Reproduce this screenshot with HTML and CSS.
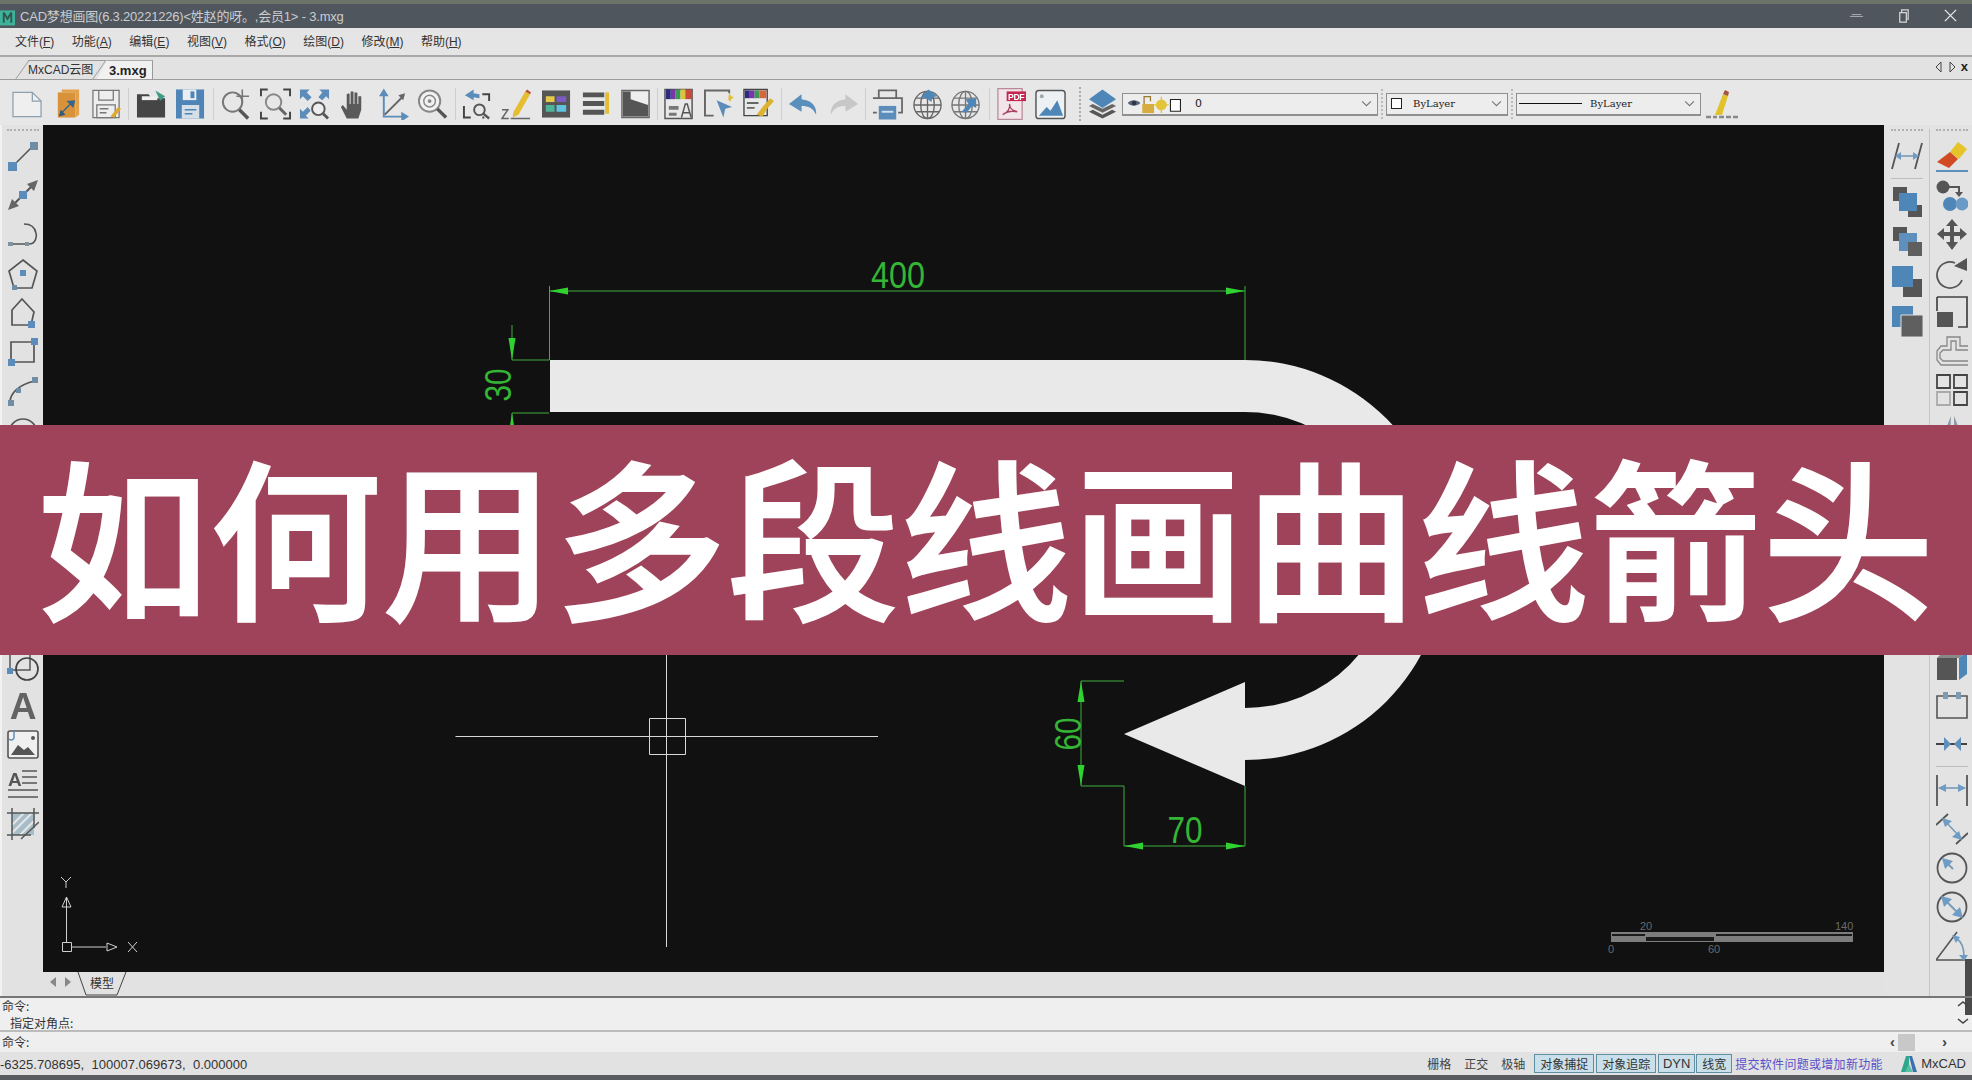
FILE: index.html
```html
<!DOCTYPE html>
<html lang="zh">
<head>
<meta charset="utf-8">
<title>CAD梦想画图</title>
<link rel="stylesheet" href="styles.css">
</head>
<body>
<div class="app">
  <header class="titlebar">
    <svg class="logo" viewBox="0 0 16 18"><path fill="#3fb39a" d="M0 2h16v16H0z"/><path fill="#31584f" d="M3 15V4h2l3 5 3-5h2v11h-2V8l-3 5-3-5v7z"/></svg>
    <span class="title-text">CAD梦想画图(6.3.20221226)&lt;姓赵的呀。,会员1&gt; - 3.mxg</span>
    <div class="win-ctrls">
      <svg class="win-btn" viewBox="0 0 16 16"><path d="M1 9h14M3 7h10" stroke="#aeb2b6" fill="none"/></svg>
      <svg class="win-btn" viewBox="0 0 16 16"><path d="M4 5h7v10H4zM6 5V2h7v10h-2" stroke="#d5d8da" fill="none" stroke-width="1.3"/></svg>
      <svg class="win-btn" viewBox="0 0 16 16"><path d="M2 2l12 12M14 2L2 14" stroke="#e2e4e6" fill="none" stroke-width="1.5"/></svg>
    </div>
  </header>

  <nav class="menubar">
    <span class="menu-item">文件(<u>F</u>)</span>
    <span class="menu-item">功能(<u>A</u>)</span>
    <span class="menu-item">编辑(<u>E</u>)</span>
    <span class="menu-item">视图(<u>V</u>)</span>
    <span class="menu-item">格式(<u>O</u>)</span>
    <span class="menu-item">绘图(<u>D</u>)</span>
    <span class="menu-item">修改(<u>M</u>)</span>
    <span class="menu-item">帮助(<u>H</u>)</span>
  </nav>

  <div class="tabbar">
    <span class="tab">MxCAD云图</span>
    <span class="tab tab-active">3.mxg</span>
    <div class="tab-nav">
      <svg class="tab-arrow" viewBox="0 0 8 12"><path d="M6 1L1 6l5 5z" fill="none" stroke="#444"/></svg>
      <svg class="tab-arrow" viewBox="0 0 8 12"><path d="M2 1l5 5-5 5z" fill="none" stroke="#444"/></svg>
      <span class="tab-close">x</span>
    </div>
  </div>

  <div class="toolbar">
    <span class="btn"><svg viewBox="0 0 32 32"><path d="M1 4h20l9 9v16H1z" fill="#efefef" stroke="#8da0ae" stroke-width="1.3"/><path d="M21 4v9h9" fill="none" stroke="#8da0ae" stroke-width="1.3"/></svg></span>
    <span class="btn"><svg viewBox="0 0 32 32"><path d="M6 4h18v26H6z" fill="#d8933a"/><path d="M10 1h18v26l-4 3V4H10z" fill="#e2a14a"/><path d="M10 26l9-9 3 3 2-8-9 1 3 3-9 9z" fill="#34658f"/><path d="M9 22l-2 7 7-2z" fill="#2f5a80"/></svg></span>
    <span class="btn"><svg viewBox="0 0 32 32"><path d="M2 2h27v28H2z" fill="#eee" stroke="#777" stroke-width="1.3"/><path d="M8 2v10h15V2M6 17h19v13H6z" fill="none" stroke="#777" stroke-width="1.3"/><path d="M9 21h9M9 25h7" stroke="#777" stroke-width="1.5"/><path d="M20 29l8-10 3 2-7 9z" fill="#e0a82e"/></svg></span>
    <span class="sep"></span>
    <span class="btn"><svg viewBox="0 0 32 32"><path d="M1 6h12l3 4h14v20H1z" fill="#454545"/><path d="M6 8h16v4H6z" fill="#eee"/><path d="M20 2l10 6-5 5z" fill="#3f9a86"/></svg></span>
    <span class="btn"><svg viewBox="0 0 32 32"><path d="M1 1h29v30H1z" fill="#4f84b6"/><path d="M8 1h14v11H8z" fill="#e8eef3"/><path d="M16 3h4v7h-4z" fill="#4f84b6"/><path d="M7 17h18v14H7z" fill="#d4dfe8"/><path d="M10 22h12M10 26h8" stroke="#4f84b6" stroke-width="1.5"/></svg></span>
    <span class="sep"></span>
    <span class="btn"><svg viewBox="0 0 32 32"><circle cx="13" cy="14" r="10" fill="none" stroke="#777" stroke-width="2"/><path d="M20 22l9 9" stroke="#555" stroke-width="3.5"/><path d="M17 8h13M23 1v14" stroke="#777" stroke-width="1.6"/></svg></span>
    <span class="btn"><svg viewBox="0 0 32 32"><path d="M1 8V1h7M24 1h7v7M1 24v7h7M24 31h7v-7" fill="none" stroke="#444" stroke-width="2"/><circle cx="14" cy="14" r="8" fill="none" stroke="#888" stroke-width="2"/><path d="M20 20l7 7" stroke="#666" stroke-width="3"/></svg></span>
    <span class="btn"><svg viewBox="0 0 32 32"><path d="M1 1h10L8 4l5 5-4 4-5-5-3 3zM31 1H21l3 3-4 5 4 3 4-4 3 3zM1 31V21l3 3 5-5 3 4-5 5 3 3z" fill="#5c8dba"/><circle cx="20" cy="21" r="6.5" fill="#eee" stroke="#555" stroke-width="2"/><path d="M25 26l5 5" stroke="#555" stroke-width="3"/></svg></span>
    <span class="btn"><svg viewBox="0 0 32 32"><path d="M9 31l-6-12 2-2 4 5V6l2-1 1 1v10h1V3h3v13h1V4h3v12h1V8h3v14l-3 9z" fill="#5a5a5a"/></svg></span>
    <span class="btn"><svg viewBox="0 0 32 32"><path d="M6 5v24h23" fill="none" stroke="#5c8dba" stroke-width="2"/><path d="M6 0l5 8H1zM32 29l-8 5v-10z" fill="#5c8dba"/><path d="M7 27L26 8" stroke="#666" stroke-width="2"/><path d="M28 5l-2 7-5-5z" fill="#666"/></svg></span>
    <span class="btn"><svg viewBox="0 0 32 32"><circle cx="13" cy="13" r="11" fill="#f2f2f2" stroke="#888" stroke-width="2"/><circle cx="13" cy="13" r="6" fill="none" stroke="#888" stroke-width="1.5"/><circle cx="13" cy="13" r="2" fill="#888"/><path d="M21 21l9 9" stroke="#555" stroke-width="3.5"/></svg></span>
    <span class="sep"></span>
    <span class="btn"><svg viewBox="0 0 32 32"><path d="M21 6h7v7M2 18v12h7M21 30h2" fill="none" stroke="#444" stroke-width="2"/><path d="M12 1L3 7l9 5V9l6 1V6l-6-1z" fill="#5c8dba"/><circle cx="18" cy="22" r="5.5" fill="none" stroke="#555" stroke-width="2"/><path d="M22 26l6 5" stroke="#555" stroke-width="2.5"/></svg></span>
    <span class="btn"><svg viewBox="0 0 32 32"><path d="M13 24L25 3l5 3-12 21-6 3z" fill="#e5bd30"/><path d="M25 3l2-2 4 3-1 2z" fill="#b9503a"/><path d="M1 22h6L1 31h7M10 31h20" fill="none" stroke="#666" stroke-width="1.6"/></svg></span>
    <span class="btn"><svg viewBox="0 0 32 32"><path d="M1 2h29v28H1z" fill="#555"/><path d="M5 8h9v6H5z" fill="#e6c84a"/><path d="M16 8h10v6H16z" fill="#7b5bc2"/><path d="M5 17h9v7H5z" fill="#4fb59a"/><path d="M16 17h10v7H16z" fill="#5fc3e0"/></svg></span>
    <span class="btn"><svg viewBox="0 0 32 32"><path d="M3 4h22v5H3zM3 13h22v5H3zM3 22h22v5H3z" fill="#555"/><path d="M26 4h4v22h-4z" fill="#e5bd30"/></svg></span>
    <span class="btn"><svg viewBox="0 0 32 32"><path d="M2 2h28v28H2z" fill="#eee" stroke="#666" stroke-width="1.5"/><path d="M3 3h8v8l18 6v12H3z" fill="#555"/></svg></span>
    <span class="sep"></span>
    <span class="btn"><svg viewBox="0 0 32 32"><path d="M1 1h28v30H1z" fill="#e8e8e8" stroke="#555" stroke-width="1.5"/><path d="M2 1h5v10H2z" fill="#2b2b80"/><path d="M7 1h5v10H7z" fill="#7b35a8"/><path d="M12 1h5v10h-5z" fill="#3a9a55"/><path d="M17 1h5v10h-5z" fill="#d9c53a"/><path d="M22 1h7v10h-7z" fill="#c74a3a"/><path d="M5 18h10v4H5zM5 25h8v3H5z" fill="#777"/><path d="M18 30l4-14h2l4 14M20 25h6" fill="none" stroke="#555" stroke-width="1.5"/></svg></span>
    <span class="btn"><svg viewBox="0 0 32 32"><path d="M26 5V2H1v26h9" fill="none" stroke="#666" stroke-width="2"/><path d="M13 12l16 7-7 2-2 9z" fill="#5c8dba"/><path d="M26 4l2 4 3 1-3 2-1 3-2-3z" fill="#e5bd30"/></svg></span>
    <span class="btn"><svg viewBox="0 0 32 32"><path d="M1 1h24v27H1z" fill="#e8e8e8" stroke="#444" stroke-width="1.4"/><path d="M2 2h5v8H2z" fill="#2b2b80"/><path d="M7 2h5v8H7z" fill="#7b35a8"/><path d="M12 2h5v8h-5z" fill="#3a9a55"/><path d="M17 2h7v8h-7z" fill="#d9653a"/><path d="M4 15h12M4 20h8" stroke="#666" stroke-width="2"/><path d="M14 27l7-9 4 3-5 8zM21 18l7-8 4 3-7 8z" fill="#dcb22e"/></svg></span>
    <span class="sep"></span>
    <span class="btn"><svg viewBox="0 0 32 32"><path d="M14 6L1 16l13 8v-6c7 0 12 2 15 9 1-8-4-15-15-16z" fill="#5a8fbd"/></svg></span>
    <span class="btn"><svg viewBox="0 0 32 32"><path d="M18 6l13 10-13 8v-6c-7 0-12 2-15 9-1-8 4-15 15-16z" fill="#c7c7c7"/></svg></span>
    <span class="sep"></span>
    <span class="btn"><svg viewBox="0 0 32 32"><path d="M7 10V2h18v8" fill="none" stroke="#666" stroke-width="1.8"/><path d="M1 10h30v15h-4M5 25H1z" fill="none" stroke="#666" stroke-width="1.8"/><path d="M7 18h18v14H7z" fill="#5c8dba"/><path d="M10 24h12" stroke="#cfe0ee" stroke-width="2"/></svg></span>
    <span class="btn"><svg viewBox="0 0 32 32"><g fill="none" stroke="#666" stroke-width="1.4"><circle cx="16" cy="17" r="14"/><ellipse cx="16" cy="17" rx="7" ry="14"/><path d="M2 17h28M4 10h24M4 24h24M16 3v28"/></g><path d="M9 9l8-8 9 7-5 1-1 5-5-4z" fill="#4f86b8"/></svg></span>
    <span class="btn"><svg viewBox="0 0 32 32"><g fill="none" stroke="#777" stroke-width="1.4"><circle cx="15" cy="17" r="14"/><ellipse cx="15" cy="17" rx="7" ry="14"/><path d="M1 17h28M3 10h24M3 24h24M15 3v28"/></g><path d="M26 10v10l-4-2-6 7-5-1 7-8-3-5z" fill="#4f86b8"/></svg></span>
    <span class="sep"></span>
    <span class="btn"><svg viewBox="0 0 32 32"><path d="M2 0h25v32H2z" fill="#f2e6ea" stroke="#b9899a" stroke-width="1.3"/><path d="M11 3h20v10H11z" fill="#c4264f"/><text class="pdf-label" x="12.5" y="11.5" textLength="17">PDF</text><path d="M7 27c5-2 8-7 7-11 0 4 3 7 8 8-5-1-11 0-15 3z" fill="none" stroke="#a94060" stroke-width="1.4"/></svg></span>
    <span class="btn"><svg viewBox="0 0 32 32"><rect x="1" y="2" width="30" height="29" rx="3" fill="#eef1f3" stroke="#555" stroke-width="1.5"/><circle cx="7" cy="8" r="2" fill="#9aa"/><path d="M4 28l8-9 4 4 7-11 6 16z" fill="#4f86b8"/></svg></span>
    <span class="grip"></span>
    <span class="btn"><svg viewBox="0 0 32 32"><path d="M2 24l14 7 14-7-4-2-10 5-10-5z" fill="#555"/><path d="M2 18l14 7 14-7-4-2-10 5-10-5z" fill="#666"/><path d="M16 1l14 10-14 9L2 11z" fill="#4f86b8"/></svg></span>
    <div class="combo combo-layer">
      <svg class="layer-state" viewBox="0 0 60 22"><path d="M0 10c3-4 10-4 14 0-4 4-11 4-14 0z" fill="#56677a"/><circle cx="7" cy="10" r="2.500" fill="#334"/><path d="M16 11h13v10H16z" fill="#d8ad40"/><path d="M18 11V3h7v5" fill="none" stroke="#9a7a2c" stroke-width="1.4"/><circle cx="37" cy="12" r="6" fill="#e3c53a"/><path d="M37 3v18M29 12h16" stroke="#e3c53a" stroke-width="1.5"/><path d="M47 6h11v13H47z" fill="#fff" stroke="#222" stroke-width="1.2"/></svg>
      <span class="combo-zero">0</span>
      <svg class="chev" viewBox="0 0 10 6"><path d="M1 1l4 4 4-4" fill="none" stroke="#777"/></svg>
    </div>
    <span class="combo-gap"></span>
    <div class="combo combo-color">
      <span class="swatch"></span>
      <span class="combo-text">ByLayer</span>
      <svg class="chev" viewBox="0 0 10 6"><path d="M1 1l4 4 4-4" fill="none" stroke="#777"/></svg>
    </div>
    <span class="combo-gap"></span>
    <div class="combo combo-line">
      <span class="line-sample"></span>
      <span class="combo-text">ByLayer</span>
      <svg class="chev" viewBox="0 0 10 6"><path d="M1 1l4 4 4-4" fill="none" stroke="#777"/></svg>
    </div>
    <svg class="match-pen" viewBox="0 0 32 32"><path d="M9 27l8-21 5 2-6 19z" fill="#e2c22c"/><path d="M17 6l2-4 4 2-1 4z" fill="#a8553e"/><path d="M0 29h5M7 29h4M13 29h5M20 29h5M27 29h5" stroke="#888" stroke-width="2.4"/></svg>
  </div>

  <main class="workspace">
    <aside class="sidebar-left">
      <span class="grip-h"></span>
      <span class="tool"><svg viewBox="0 0 32 32"><path d="M6 26L26 6" stroke="#555" stroke-width="1.6"/><path d="M1 22h9v9H1z" fill="#5c8dba"/><path d="M23 2h8v8h-8z" fill="#6f8da5"/></svg></span>
      <span class="tool"><svg viewBox="0 0 32 32"><path d="M6 26L26 6" stroke="#555" stroke-width="2"/><path d="M31 1l-4 11-7-7zM1 31l4-11 7 7z" fill="#666"/><path d="M12 12h8v8h-8z" fill="#5c8dba"/></svg></span>
      <span class="tool"><svg viewBox="0 0 32 32"><path d="M4 26h18c7 0 8-8 7-11-1-5-5-9-12-9" fill="none" stroke="#555" stroke-width="1.6"/><path d="M1 24h5v4H1zM18 24h4v4h-4z" fill="#7f929f"/></svg></span>
      <span class="tool"><svg viewBox="0 0 32 32"><path d="M16 2l14 11-5 17H7L2 13z" fill="none" stroke="#555" stroke-width="1.7"/><path d="M13 12h6v6h-6z" fill="#5c8dba"/><path d="M5 27h5v5H5z" fill="#6f8da5"/></svg></span>
      <span class="tool"><svg viewBox="0 0 32 32"><path d="M15 2l12 13-3 13H5V13z" fill="none" stroke="#555" stroke-width="1.7"/><path d="M21 24h7v7h-7z" fill="#5c8dba"/></svg></span>
      <span class="tool"><svg viewBox="0 0 32 32"><path d="M4 6h23v20H4z" fill="none" stroke="#555" stroke-width="1.7"/><path d="M24 2h7v7h-7zM1 23h7v7H1z" fill="#5c8dba"/></svg></span>
      <span class="tool"><svg viewBox="0 0 32 32"><path d="M3 26c1-7 7-16 25-20" fill="none" stroke="#555" stroke-width="1.7"/><path d="M1 25h6v6H1zM9 13h5v5H9zM25 2h6v6h-6z" fill="#6f8da5"/></svg></span>
      <span class="tool"><svg viewBox="0 0 32 32"><circle cx="16" cy="18" r="14" fill="none" stroke="#555" stroke-width="1.7"/></svg></span>
      <span class="left-gap"></span>
      <span class="tool"><svg viewBox="0 0 32 32"><path d="M3 3h20v16H3z" fill="none" stroke="#555" stroke-width="1.5"/><circle cx="20" cy="18" r="11" fill="none" stroke="#444" stroke-width="1.7"/><path d="M0 17h6v6H0z" fill="#5c8dba"/></svg></span>
      <span class="tool"><svg class="tool-svg-open" viewBox="0 0 32 32"><text class="tool-a" x="16" y="29">A</text></svg></span>
      <span class="tool"><svg viewBox="0 0 32 32"><rect x="1" y="2" width="30" height="27" rx="2" fill="#f0f0f0" stroke="#555" stroke-width="1.6"/><path d="M4 26l7-10 6 5 4-3 7 8z" fill="#555"/><circle cx="26" cy="9" r="2" fill="#555"/><path d="M7 2v7a3 3 0 0 1-5 1" fill="none" stroke="#5c8dba" stroke-width="1.5"/></svg></span>
      <span class="tool"><svg class="tool-svg-open" viewBox="0 0 32 32"><text class="tool-a-small" x="1" y="18">A</text><path d="M15 3h15M15 9h15M15 15h15M1 22h30M1 29h30" stroke="#555" stroke-width="1.7"/></svg></span>
      <span class="tool"><svg viewBox="0 0 32 32"><path d="M5 5h22v22H5z" fill="#a7bdc9"/><path d="M5 17L17 5M5 25L25 5M13 27L27 13" stroke="#e6e6e6" stroke-width="2"/><path d="M0 5h32M0 27h24M5 0v32M27 0v20" stroke="#555" stroke-width="1.5"/><path d="M14 31L32 14" stroke="#555" stroke-width="1.5"/></svg></span>
    </aside>

    <div class="center">
      <svg class="drawing" viewBox="43 125 1841 847">
        <rect class="bg" x="43" y="125" width="1841" height="847"/>
        <path class="shape" d="M550 360H1245A200 200 0 0 1 1245 760V786L1124 734 1245 682V708A148 148 0 0 0 1245 412H550Z"/>
        <g class="dim-line">
          <path d="M549.500 360V286M1245 360V286M549 291H1245"/>
          <path d="M512 325V360H549M512 413H549M512 413V470"/>
          <path d="M1081 786V681H1124M1081 786H1124M1124 786V846M1245 786V846M1124 846H1245"/>
        </g>
        <g class="dim-arrow">
          <path d="M549 291L568 287.500V294.500ZM1245 291L1226 287.500V294.500Z"/>
          <path d="M512 360L508.500 338H515.500ZM512 413L508.500 435H515.500Z"/>
          <path d="M1081 681L1077.500 702H1084.500ZM1081 786L1077.500 765H1084.500Z"/>
          <path d="M1124 846L1143 842.500V849.500ZM1245 846L1226 842.500V849.500Z"/>
        </g>
        <g class="dim-text">
          <text x="898" y="288" textLength="54" lengthAdjust="spacingAndGlyphs">400</text>
          <text x="1185" y="843" textLength="35" lengthAdjust="spacingAndGlyphs">70</text>
          <text transform="translate(511 385) rotate(-90)" textLength="33" lengthAdjust="spacingAndGlyphs">30</text>
          <text transform="translate(1081 734) rotate(-90)" textLength="33" lengthAdjust="spacingAndGlyphs">60</text>
        </g>
        <g class="cursor">
          <path d="M455.500 736.500H878M666.500 525V947M649.500 718.500H685.500V754.500H649.500Z"/>
        </g>
        <g class="ucs">
          <path d="M62.500 942.500H71.500V951.500H62.500ZM66.500 942V897M71 947H106"/>
          <path d="M66.500 897L62 907H71ZM117 947L107 943V951Z"/>
          <path d="M128 942L137 952M137 942L128 952M61 877L66 882L71 877M66 882V888"/>
        </g>
        <g class="scalebar">
          <rect class="bar-out" x="1611" y="932" width="242" height="10"/>
          <rect class="bar-dark" x="1646" y="937" width="68" height="4"/>
          <rect class="bar-dark" x="1716" y="934" width="136" height="2"/>
          <rect class="bar-dark" x="1612" y="934" width="33" height="2"/>
          <text x="1640" y="930">20</text>
          <text x="1835" y="930">140</text>
          <text x="1608" y="953">0</text>
          <text x="1708" y="953">60</text>
        </g>
      </svg>
      <div class="modelbar">
        <svg class="nav-arrow" viewBox="0 0 10 12"><path d="M8 1L2 6l6 5z" fill="#888"/></svg>
        <svg class="nav-arrow" viewBox="0 0 10 12"><path d="M2 1l6 5-6 5z" fill="#888"/></svg>
        <span class="model-tab">
          <svg class="model-shape" viewBox="0 0 50 24"><path d="M1 0l8 23h31l9-23" fill="none" stroke="#444"/></svg>
          <span class="model-label">模型</span>
        </span>
      </div>
    </div>

    <aside class="sidebar-right">
      <div class="right-col">
        <span class="grip-h"></span>
        <span class="tool tool-wide"><svg viewBox="0 0 32 32"><path d="M8 3L1 29M31 3l-7 26" stroke="#555" stroke-width="1.8"/><path d="M5 16h22" stroke="#7a9ab5" stroke-width="1.6"/><path d="M4 16l6-4v8zM28 16l-6-4v8z" fill="#6e9cc4"/></svg></span>
        <span class="rule rule-upper"></span>
        <span class="tool tool-wide"><svg viewBox="0 0 32 32"><path d="M2 2h14v14H2zM17 20h14v12H17z" fill="#555"/><path d="M8 8h18v18H8z" fill="#4f86b8"/></svg></span>
        <span class="tool tool-wide"><svg viewBox="0 0 32 32"><path d="M2 2h14v14H2z" fill="#555"/><path d="M8 8h18v18H8z" fill="#5f90bd"/><path d="M17 17h14v14H17z" fill="#5f5f5f"/></svg></span>
        <span class="tool tool-wide tool-drop"><svg viewBox="0 0 32 32"><path d="M12 14h19v18H12z" fill="#555"/><path d="M1 1h21v21H1z" fill="#4f86b8"/></svg></span>
        <span class="tool tool-wide"><svg viewBox="0 0 32 32"><path d="M1 1h21v21H1z" fill="#4f86b8"/><path d="M10 10h22v22H10z" fill="#5f5f5f" stroke="#ddd"/></svg></span>
      </div>
      <div class="right-col right-col-b">
        <span class="grip-h"></span>
        <span class="tool"><svg viewBox="0 0 32 32"><path d="M14 12L22 2l9 7-8 10z" fill="#e6c328"/><path d="M1 22l13-10 8 7-9 9z" fill="#d04a22"/><path d="M0 31h32" stroke="#4f86b8" stroke-width="1.8"/></svg></span>
        <span class="tool"><svg viewBox="0 0 32 32"><circle cx="7" cy="8" r="6.500" fill="#555"/><path d="M13 8h10v6" fill="none" stroke="#555" stroke-width="2"/><path d="M19 13h8l-4 5z" fill="#555"/><circle cx="14" cy="25" r="7" fill="#4f86b8"/><circle cx="26" cy="25" r="6.500" fill="#6a9ac6"/></svg></span>
        <span class="tool"><svg viewBox="0 0 32 32"><path d="M16 1l6 7h-4v6h6v-4l7 6-7 6v-4h-6v6h4l-6 8-6-8h4v-6H8v4l-7-6 7-6v4h6V8h-4z" fill="#555"/></svg></span>
        <span class="tool"><svg viewBox="0 0 32 32"><path d="M26 23A13 13 0 1 1 19 6" fill="none" stroke="#555" stroke-width="1.8"/><path d="M18 9L31 1v13z" fill="#555"/></svg></span>
        <span class="tool"><svg viewBox="0 0 32 32"><path d="M1 1h30v30h-9M1 1v14" fill="none" stroke="#444" stroke-width="1.7"/><path d="M1 16h16v15H1z" fill="#555"/></svg></span>
        <span class="tool"><svg viewBox="0 0 32 32"><path d="M32 11H24V2H11v9H5l-4 5v9l4 5h27M32 15H20V6h-5v9H7l-3 3v5l3 3h25" fill="none" stroke="#888" stroke-width="1.3"/></svg></span>
        <span class="tool"><svg viewBox="0 0 32 32"><path d="M1 1h13v13H1zM18 1h13v13H18zM18 18h13v13H18z" fill="none" stroke="#444" stroke-width="1.8"/><path d="M1 18h13v13H1z" fill="none" stroke="#aaa" stroke-width="1.8"/></svg></span>
        <span class="tool"><svg viewBox="0 0 32 32"><path d="M15 3L4 30h10zM18 3l11 27H18z" fill="#8a9aa8"/></svg></span>
        <span class="right-gap"></span>
        <span class="tool"><svg viewBox="0 0 32 32"><path d="M1 8h20v22H1z" fill="#555"/><path d="M1 8l6-6h24l-8 6z" fill="#888"/><path d="M23 8l8-6v22l-8 6z" fill="#4f86b8"/></svg></span>
        <span class="tool"><svg viewBox="0 0 32 32"><path d="M8 7H1v22h30V7h-7M12 7h8" fill="none" stroke="#555" stroke-width="1.6"/><path d="M7 3h5v7H7zM20 3h5v7h-5z" fill="#7f9bb2"/></svg></span>
        <span class="tool"><svg viewBox="0 0 32 32"><path d="M0 16h31" stroke="#333" stroke-width="1.8"/><path d="M15 16L8 9v14zM18 16l7-7v14z" fill="#5f90bd"/></svg></span>
        <span class="rule rule-lower"></span>
        <span class="tool"><svg viewBox="0 0 32 32"><path d="M1 1v31M31 1v31" stroke="#555" stroke-width="1.8"/><path d="M3 14h26" stroke="#7a9ab5" stroke-width="1.6"/><path d="M2 14l8-4v8zM30 14l-8-4v8z" fill="#6e9cc4"/></svg></span>
        <span class="tool"><svg viewBox="0 0 32 32"><path d="M0 12L12 1M20 31L32 20" stroke="#555" stroke-width="1.8"/><path d="M8 7l17 18" stroke="#7a9ab5" stroke-width="1.6"/><path d="M6 5l10 3-7 6zM26 27l-10-3 7-6z" fill="#6e9cc4"/></svg></span>
        <span class="tool"><svg viewBox="0 0 32 32"><circle cx="16" cy="16" r="14.500" fill="none" stroke="#555" stroke-width="1.8"/><path d="M8 8l9 9" stroke="#7a9ab5" stroke-width="2"/><path d="M6 6l11 3-8 8z" fill="#6e9cc4"/></svg></span>
        <span class="tool"><svg viewBox="0 0 32 32"><circle cx="16" cy="16" r="14.500" fill="none" stroke="#555" stroke-width="1.8"/><path d="M7 7l18 18" stroke="#7a9ab5" stroke-width="2"/><path d="M5 5l11 3-8 8zM27 27l-11-3 8-8z" fill="#6e9cc4"/></svg></span>
        <span class="tool"><svg viewBox="0 0 32 32"><path d="M0 30L21 2M0 30h32" stroke="#555" stroke-width="1.6"/><path d="M20 8c6 4 8 10 8 18" fill="none" stroke="#7a9ab5" stroke-width="1.6"/><path d="M16 5l8 2-4 6zM28 31l-5-6h9z" fill="#6e9cc4"/></svg></span>
      </div>
      <span class="scroll-thumb"></span>
    </aside>
  </main>

  <section class="command">
    <div class="cmd-history">
      <div class="cmd-line">命令:</div>
      <div class="cmd-line cmd-indent">指定对角点:</div>
      <svg class="cmd-chev" viewBox="0 0 14 26"><path d="M2 7l5-4 5 4M2 20l5 4 5-4" fill="none" stroke="#444" stroke-width="1.6"/></svg>
    </div>
    <div class="cmd-input">
      <div class="cmd-line">命令:</div>
      <div class="hscroll">
        <span class="hs-arrow">‹</span>
        <span class="hs-thumb"></span>
        <span class="hs-arrow hs-end">›</span>
      </div>
    </div>
  </section>

  <footer class="statusbar">
    <span class="coords">-6325.708695,  100007.069673,  0.000000</span>
    <div class="status-right">
      <span class="st st-grid">栅格</span>
      <span class="st">正交</span>
      <span class="st st-last">极轴</span>
      <span class="st-on st-on-4">对象捕捉</span>
      <span class="st-on st-on-4">对象追踪</span>
      <span class="st-on st-dyn">DYN</span>
      <span class="st-on st-on-2">线宽</span>
      <span class="st-link">提交软件问题或增加新功能</span>
      <svg class="brand-logo" viewBox="0 0 16 16"><path d="M0 16L5 0h3v16H5z" fill="#2fa78c"/><path d="M8 0h3l5 16h-4z" fill="#3a6fb0"/><path d="M4 16l4-8 4 8z" fill="#5ac0a8"/></svg>
      <span class="brand">MxCAD</span>
    </div>
  </footer>
  <div class="bottom-edge"></div>

  <div class="banner"><span class="banner-text">如何用多段线画曲线箭头</span></div>
</div>
</body>
</html>
```

FILE: styles.css
```css
* { box-sizing: border-box; }
html, body { margin: 0; padding: 0; }
body { font-family: "Noto Sans CJK SC", "Liberation Sans", sans-serif; background: #e4e4e4; }
.app { position: relative; width: 1972px; height: 1080px; overflow: hidden; display: flex; flex-direction: column; }

.titlebar { height: 28px; flex: none; display: flex; align-items: center; padding-top: 4px; background: #50565d; border-top: 4px solid #6b7369; color: #c9cdd0; }
.logo { width: 15px; height: 18px; margin: -3px 5px 0 0; flex: none; }
.title-text { font-size: 13px; letter-spacing: -0.2px; margin-top: -6px; font-family: "Liberation Sans", "Noto Sans CJK SC", sans-serif; }
.win-ctrls { margin-left: auto; display: flex; gap: 32px; padding-right: 14px; margin-top: -6px; }
.win-btn { width: 15px; height: 15px; display: block; }

.menubar { height: 29px; flex: none; display: flex; align-items: center; gap: 17.5px; padding: 0 0 2px 15px; background: #e5e5e5; border-bottom: 2px solid #a8a8a8; }
.menu-item { font-size: 12px; color: #333; white-space: nowrap; font-family: "Liberation Sans", "Noto Sans CJK SC", sans-serif; }

.tabbar { height: 23px; flex: none; display: flex; align-items: stretch; background: #e2e2e2; border-bottom: 1px solid #9c9c9c; padding-left: 22px; color: #333; font-size: 12px; }
.tab { position: relative; width: 78px; display: flex; align-items: center; padding-left: 6px; font-family: "Liberation Sans", "Noto Sans CJK SC", sans-serif; white-space: nowrap; z-index: 1; }
.tab::before { content: ""; position: absolute; inset: 3px 0 0 0; transform: skewX(-35deg); border: 1px solid #9c9c9c; border-bottom: 0; z-index: -1; }
.tab-active { width: 56px; padding-left: 12px; margin-left: -3px; font-weight: 700; color: #222; font-size: 13px; background: #f1f1f1; border-right: 1px solid #999; border-top: 1px solid #aaa; margin-top: 3px; clip-path: polygon(10px 0, 100% 0, 100% 100%, 0 100%); }
.tab-active::before { display: none; }
.tab-nav { margin-left: auto; display: flex; align-items: center; gap: 5px; padding: 0 4px 3px 0; }
.tab-arrow { width: 8px; height: 12px; display: block; }
.tab-close { font-size: 13px; font-weight: 700; font-family: "Liberation Sans", sans-serif; color: #222; }

.toolbar { height: 45px; flex: none; display: flex; align-items: center; padding: 3px 0 0 8px; background: #e7e7e7; }
.btn { width: 39.4px; flex: none; display: flex; justify-content: center; }
.btn svg { width: 31px; height: 32px; display: block; filter: blur(0.35px); }
.sep { width: 1px; height: 32px; margin: 0 2.25px; background: #cfcfcf; flex: none; }
.grip { width: 1px; height: 34px; margin: 0 2px 0 8px; border-left: 2px dotted #aaa; flex: none; }
.combo { height: 23px; display: flex; align-items: center; flex: none; background: #ededed; border: 1px solid #8f8f8f; border-width: 1px 1px 2px 1px; padding-right: 5px; }
.combo-layer { width: 256px; margin-left: 0; }
.combo-color { width: 122px; }
.combo-line { width: 185px; }
.combo-gap { width: 8px; height: 30px; flex: none; border-left: 2px dotted #bbb; margin-left: 3px; margin-right: -3px; }
.layer-state { width: 62px; height: 20px; margin-left: 1px; flex: none; }
.combo-zero { margin-left: 9px; font-size: 11px; font-family: "DejaVu Sans", sans-serif; color: #222; }
.chev { width: 11px; height: 7px; margin-left: auto; flex: none; }
.swatch { width: 11px; height: 11px; margin: 0 11px 0 4px; background: #fff; border: 1px solid #222; flex: none; }
.combo-text { font-family: "DejaVu Serif", serif; font-size: 10px; color: #222; }
.line-sample { width: 63px; height: 1px; margin: 0 8px 0 2px; background: #111; flex: none; }
.match-pen { width: 32px; height: 34px; margin-left: 5px; flex: none; }

.workspace { flex: 1; min-height: 0; display: flex; background: #e4e4e4; }
.sidebar-left { width: 43px; flex: none; display: flex; flex-direction: column; align-items: center; padding: 4px 0 0 0; background: #e2e2e2; border-left: 2px solid #f2f2f2; }
.grip-h { display: block; height: 2px; width: 32px; margin-bottom: 5px; flex: none; border-top: 2px dotted #b0b0b0; }
.tool { height: 39.3px; flex: none; display: flex; align-items: center; justify-content: center; }
.tool svg { width: 32px; height: 32px; display: block; filter: blur(0.35px); }
.tool .tool-svg-open { overflow: visible; }
.left-gap { height: 196.500px; flex: none; }
.tool-a { font: 700 37px "Liberation Sans", sans-serif; fill: #636363; text-anchor: middle; }
.tool-a-small { font: 700 19px "Liberation Sans", sans-serif; fill: #555; }
.pdf-label { font: 700 9px "Liberation Sans", sans-serif; fill: #fff; }

.center { flex: 1; min-width: 0; display: flex; flex-direction: column; }
.drawing { width: 1841px; height: 847px; display: block; flex: none; }
.bg { fill: #111; }
.shape { fill: #e9e9e9; }
.dim-line path { fill: none; stroke: #3eae3e; stroke-width: 1; }
.dim-arrow path { fill: #2fd230; }
.dim-text text { fill: #35b535; font: 36px "Liberation Sans", sans-serif; text-anchor: middle; }
.cursor path { fill: none; stroke: #d8d8d8; stroke-width: 1; }
.ucs path { fill: none; stroke: #d0d0d0; stroke-width: 1; }
.scalebar text { fill: #6a6a6a; font: 11px "Liberation Sans", sans-serif; }
.bar-out { fill: #7d7d7d; }
.bar-dark { fill: #1a1a1a; }

.modelbar { height: 24px; flex: none; display: flex; align-items: center; padding: 0 0 4px 5px; background: #e2e2e2; }
.nav-arrow { width: 10px; height: 12px; margin-right: 5px; flex: none; }
.model-tab { position: relative; margin-left: -1px; width: 50px; height: 24px; display: flex; justify-content: center; align-items: center; margin-top: 4px; padding-bottom: 4px; }
.model-shape { position: absolute; inset: 0; width: 50px; height: 24px; }
.model-label { font-size: 12px; color: #333; position: relative; font-family: "Noto Sans CJK SC", sans-serif; }

.sidebar-right { position: relative; width: 88px; flex: none; display: flex; background: #e3e3e3; padding-top: 4px; }
.right-col { width: 45px; flex: none; display: flex; flex-direction: column; align-items: center; padding-left: 1px; }
.right-col .tool-wide { height: 39.5px; }
.right-col .tool-drop { margin-top: 1px; }
.rule { display: block; height: 1px; width: 32px; margin: 1px 0 1px; background: #bdbdbd; flex: none; }
.rule-upper { margin: 2px 0 3px; }
.rule-lower { margin: 3px 0 3px; }
.right-col-b { width: 43px; border-left: 1px solid #c4c4c4; }
.right-col-b .tool { height: 39px; }
.right-gap { height: 198px; flex: none; }
.scroll-thumb { position: absolute; right: 0; top: 834px; width: 7px; height: 56px; background: #4a4a4a; }

.command { height: 56px; flex: none; background: #efefef; }
.cmd-history { position: relative; height: 36px; border-top: 2px solid #777; border-bottom: 2px solid #bcbcbc; }
.cmd-input { position: relative; height: 20px; display: flex; align-items: center; }
.cmd-line { font-size: 12px; line-height: 16px; padding-left: 2px; color: #333; height: 16px; }
.cmd-indent { padding-left: 10px; margin-top: 1px; }
.cmd-chev { position: absolute; right: 2px; top: 1px; width: 14px; height: 26px; }
.hscroll { margin-left: auto; width: 60px; margin-right: 22px; display: flex; align-items: center; }
.hs-arrow { font: 700 15px/16px "Liberation Sans", sans-serif; color: #444; width: 8px; }
.hs-thumb { width: 17px; height: 17px; background: #c8c8c8; }
.hs-end { margin-left: auto; }

.statusbar { height: 23px; flex: none; display: flex; align-items: center; background: #e2e2e2; font-size: 12px; color: #444; }
.coords { font: 13px "Liberation Sans", sans-serif; white-space: pre; color: #333; letter-spacing: 0.02px; margin-top: 1px; }
.status-right { margin-left: auto; display: flex; align-items: center; height: 100%; padding-right: 6px; }
.st { width: 24px; white-space: nowrap; margin-right: 13px; }
.st-last { margin-right: 9px; }
.st-on { height: 19px; margin-left: 0; margin-right: 2px; display: flex; align-items: center; justify-content: center; background: #c9e0eb; border: 1px solid #5f8fa1; white-space: nowrap; color: #333; }
.st-on-4 { width: 60px; }
.st-dyn { width: 37px; font-family: "Liberation Sans", sans-serif; font-size: 13px; margin-right: 1px; }
.st-on-2 { width: 36px; }
.st-link { width: 148px; color: #5a4fca; white-space: nowrap; margin-left: 1px; margin-right: 18px; letter-spacing: 0.3px; }
.brand-logo { width: 16px; height: 16px; flex: none; margin-right: 4px; }
.brand { font: 13px "Liberation Sans", sans-serif; color: #333; }
.bottom-edge { height: 5px; flex: none; background: #595d61; }

.banner { position: absolute; left: 0; right: 0; top: 425px; height: 230px; padding-bottom: 16px; background: #9e4359; display: flex; align-items: center; justify-content: center; }
.banner-text { color: #fff; font: 500 172px/1 "Noto Sans CJK SC", sans-serif; -webkit-text-stroke: 2px #fff; letter-spacing: 0.5px; white-space: nowrap; }
```
